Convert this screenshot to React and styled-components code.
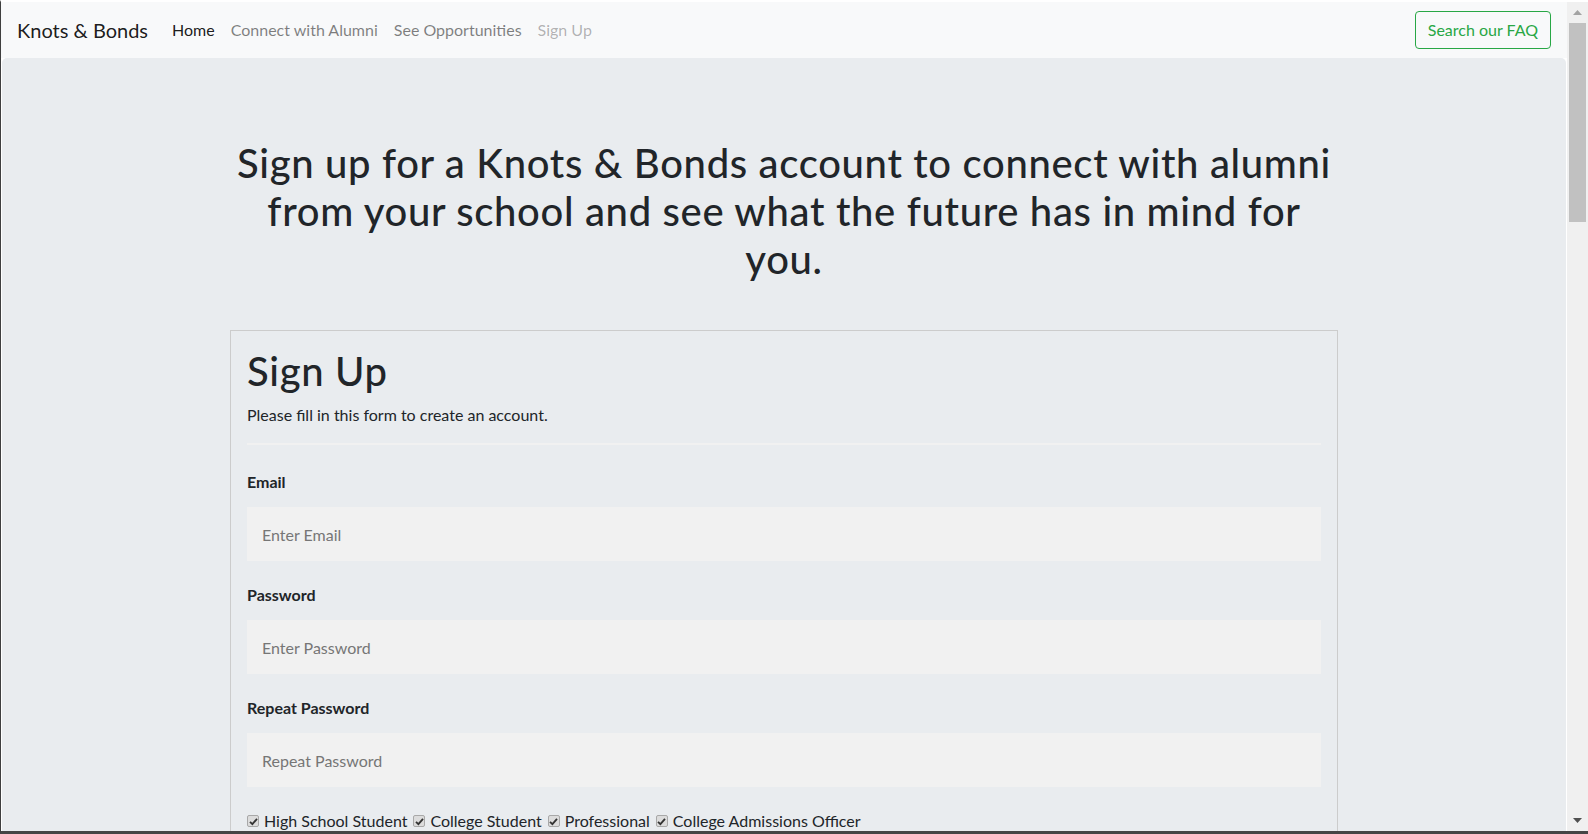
import React from "react";
import styled, { createGlobalStyle } from "styled-components";

const Global = createGlobalStyle`
  *, *::before, *::after { box-sizing: border-box; }
  html, body { margin: 0; padding: 0; overflow: hidden; }
  body {
    font-family: Lato, "Open Sans", "Liberation Sans", sans-serif;
    font-size: 16px;
    line-height: 1.5;
    color: #212529;
    background: #fff;
  }
`;

const Frame = styled.div`
  display: flex;
  height: 834px;
  border-left: 1px solid #3f3f3f;
  border-top: 2px solid #ffffff;
  border-bottom: 3px solid #454545;
  overflow: hidden;
`;

const Viewport = styled.div`
  flex: 1;
  min-width: 0;
  overflow: hidden;
  display: flex;
  flex-direction: column;
`;

const Navbar = styled.nav`
  flex: none;
  height: 56px;
  display: flex;
  align-items: center;
  padding: 0 16px;
  background: #f8f9fa;
`;

const Brand = styled.a`
  font-size: 20px;
  line-height: 30px;
  color: rgba(0, 0, 0, 0.9);
  margin-right: 16px;
  text-decoration: none;
  cursor: pointer;
`;

const NavList = styled.ul`
  display: flex;
  list-style: none;
  margin: 0;
  padding: 0;
`;

const navColors = {
  active: "rgba(0, 0, 0, 0.9)",
  normal: "rgba(0, 0, 0, 0.5)",
  disabled: "rgba(0, 0, 0, 0.3)",
};

const NavLink = styled.li`
  padding: 8px 8px;
  line-height: 24px;
  color: ${(p) => navColors[p.$state || "normal"]};
  cursor: ${(p) => (p.$state === "disabled" ? "default" : "pointer")};
`;

const FaqButton = styled.button`
  margin-left: auto;
  font-family: inherit;
  font-size: 16px;
  line-height: 24px;
  padding: 6px 12px;
  color: #28a745;
  background: transparent;
  border: 1px solid #28a745;
  border-radius: 4px;
  cursor: pointer;
`;

const Jumbotron = styled.main`
  flex: 1;
  margin: 0 1px;
  padding: 81px 0 64px;
  background: #e9ecef;
  border-radius: 5px 5px 0 0;
`;

const Lead = styled.h1`
  width: 1110px;
  margin: 0 auto 47px;
  font-size: 40px;
  line-height: 48px;
  font-weight: 500;
  letter-spacing: 0.67px;
  text-align: center;
`;

const FormBox = styled.form`
  width: 1108px;
  margin: 0 auto;
  padding: 16px;
  border: 1px solid #cccccc;
`;

const Title = styled.h1`
  margin: 0 0 8px;
  font-size: 40px;
  line-height: 48px;
  font-weight: 500;
  letter-spacing: 0.67px;
`;

const Intro = styled.p`
  margin: 0 0 16px;
  line-height: 24px;
`;

const Rule = styled.hr`
  margin: 0 0 25px;
  border: 1px solid #f1f1f1;
`;

const Field = styled.div`
  margin-bottom: 22px;
`;

const Label = styled.label`
  display: block;
  font-weight: 700;
  line-height: 24px;
  margin-bottom: 13px;
`;

const Input = styled.input`
  display: block;
  width: 100%;
  height: 54px;
  padding: 0 15px;
  border: none;
  background: #f1f1f1;
  font-family: inherit;
  font-size: 16px;
  color: #212529;
  outline: none;
  &::placeholder {
    color: #767676;
  }
`;

const RoleRow = styled.div`
  display: flex;
  align-items: center;
  gap: 6px;
  line-height: 24px;
`;

const Option = styled.label`
  display: inline-flex;
  align-items: center;
  gap: 5px;
  cursor: pointer;
`;

const Check = styled.span`
  width: 12px;
  height: 12px;
  display: inline-flex;
  align-items: center;
  justify-content: center;
  background: #dcdcdc;
  border: 1px solid #a8a8a8;
  border-radius: 2px;
  color: #333;
`;

const Scrollbar = styled.div`
  flex: none;
  width: 21px;
  display: flex;
  flex-direction: column;
  background: #f0f0f0;
`;

const ScrollButton = styled.div`
  flex: none;
  height: 21px;
  display: flex;
  align-items: center;
  justify-content: center;
  color: ${(p) => (p.$disabled ? "#a3a3a3" : "#505050")};
`;

const Track = styled.div`
  flex: 1;
  padding: 0 2px;
`;

const Thumb = styled.div`
  height: 199px;
  background: #c1c1c1;
`;

const Arrow = ({ up }) => (
  <svg width="9" height="5" viewBox="0 0 9 5">
    <path d={up ? "M0 5 L4.5 0 L9 5 Z" : "M0 0 L9 0 L4.5 5 Z"} fill="currentColor" />
  </svg>
);

const Tick = () => (
  <svg width="9" height="9" viewBox="0 0 9 9">
    <path d="M1 4.8 L3.4 7.2 L8 1.8" fill="none" stroke="currentColor" strokeWidth="1.8" />
  </svg>
);

const fields = [
  { id: "email", label: "Email", placeholder: "Enter Email", type: "text" },
  { id: "psw", label: "Password", placeholder: "Enter Password", type: "password" },
  { id: "psw-repeat", label: "Repeat Password", placeholder: "Repeat Password", type: "password" },
];

const roles = ["High School Student", "College Student", "Professional", "College Admissions Officer"];

export default function App() {
  return (
    <>
      <Global />
      <Frame>
        <Viewport>
          <Navbar>
            <Brand>Knots &amp; Bonds</Brand>
            <NavList>
              <NavLink $state="active">Home</NavLink>
              <NavLink>Connect with Alumni</NavLink>
              <NavLink>See Opportunities</NavLink>
              <NavLink $state="disabled">Sign Up</NavLink>
            </NavList>
            <FaqButton type="button">Search our FAQ</FaqButton>
          </Navbar>
          <Jumbotron>
            <Lead>
              Sign up for a Knots &amp; Bonds account to connect with alumni
              <br />
              from your school and see what the future has in mind for
              <br />
              you.
            </Lead>
            <FormBox onSubmit={(e) => e.preventDefault()}>
              <Title>Sign Up</Title>
              <Intro>Please fill in this form to create an account.</Intro>
              <Rule />
              {fields.map((f) => (
                <Field key={f.id}>
                  <Label htmlFor={f.id}>{f.label}</Label>
                  <Input id={f.id} type={f.type} placeholder={f.placeholder} />
                </Field>
              ))}
              <RoleRow>
                {roles.map((r) => (
                  <Option key={r}>
                    <Check>
                      <Tick />
                    </Check>
                    {r}
                  </Option>
                ))}
              </RoleRow>
            </FormBox>
          </Jumbotron>
        </Viewport>
        <Scrollbar>
          <ScrollButton $disabled>
            <Arrow up />
          </ScrollButton>
          <Track>
            <Thumb />
          </Track>
          <ScrollButton>
            <Arrow />
          </ScrollButton>
        </Scrollbar>
      </Frame>
    </>
  );
}
